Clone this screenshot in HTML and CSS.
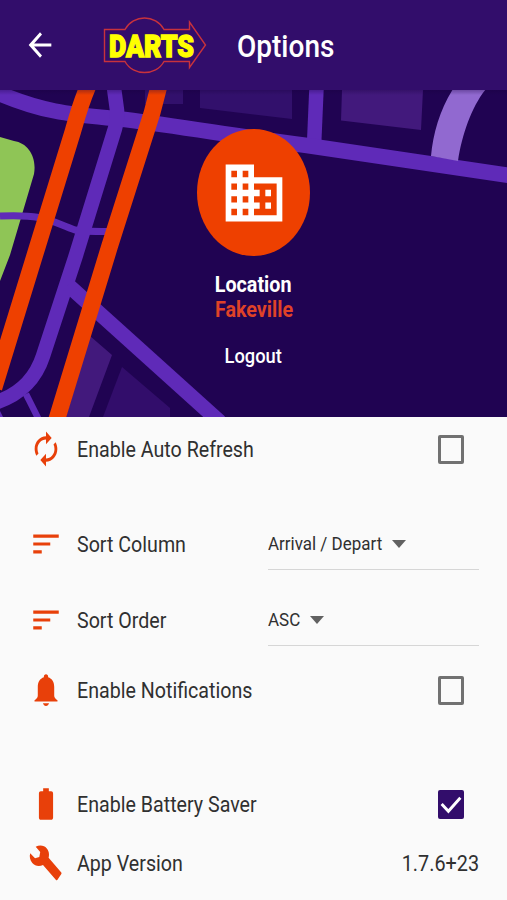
FILE: index.html
```html
<!DOCTYPE html>
<html lang="en">
<head>
<meta charset="utf-8">
<title>Options</title>
<link rel="stylesheet" href="styles.css">
</head>
<body>
<header class="appbar">
  <svg class="back" viewBox="0 0 24 24" preserveAspectRatio="none"><path d="M20 11H7.83l5.59-5.59L12 4l-8 8 8 8 1.41-1.41L7.83 13H20v-2z"/></svg>
  <svg class="logo" viewBox="0 0 108 60">
    <path class="logo-line" d="M3.500 14.500H24C28 7 36 3 43.500 3S59 7 63 14.500H88.500V7L104.500 30 88.500 52.500V46.500H63C59 54 51 57.500 43.500 57.500S28 54 24 46.500H3.500Z"/>
    <text class="logo-text" x="8" y="41.500" textLength="85" lengthAdjust="spacingAndGlyphs">DARTS</text>
  </svg>
  <h1 class="title"><span class="narrow">Options</span></h1>
</header>
<section class="hero">
  <svg class="map" viewBox="0 90 507 327" preserveAspectRatio="none">
    <defs><linearGradient id="shade" x1="0" y1="0" x2="0" y2="1"><stop offset="0" stop-color="#18003c" stop-opacity=".3"/><stop offset="1" stop-color="#18003c" stop-opacity="0"/></linearGradient></defs>
    <path fill="#32106c" d="M145 90H183V104H145ZM200 90H292V119L200 108Z"/>
    <path fill="#42197c" d="M342 90H423L421 130 341 120.500ZM90 336L112 355 89 417H66Z"/>
    <path fill="#320d6b" d="M122 367L170 408V417H103Z"/>
    <path fill="#8fc556" d="M0 137L14 141C28 143 37 157 34 174L10 255 0 281Z"/>
    <g fill="none" stroke="#5f2ab8">
      <path stroke-width="7" d="M0 216C45 214 50 221 75 230Q82 231.500 108 231.500"/>
      <path stroke-width="14.500" d="M316.500 88L314 146"/>
      <path stroke-width="15.500" d="M-4 92C48 115 82 115 125 119.500C185 127 240 137 307 145.500L510 175.500"/>
      <path stroke-width="14.500" d="M114 88L117 110Q118 121 113 135L76 255 43 356Q32 390 -3 402"/>
      <path stroke-width="15" d="M68 285L220 422"/>
      <path stroke-width="6.500" d="M26 394L39 420"/>
    </g>
    <path fill="#5f2ab8" d="M0 411L3 417H0Z"/>
    <path fill="#9169d0" d="M453 89H486C472 106 462 134 458 161L431 156C433 134 440 109 453 89Z"/>
    <g fill="none" stroke="#ee4000">
      <path stroke-width="16.500" d="M89 84C81 102 77 117 73 131L37 248-6 388"/>
      <path stroke-width="16.800" d="M159.500 84L152 113 110 245 56 422"/>
    </g>
    <rect y="90" width="507" height="5" fill="url(#shade)"/>
  </svg>
  <div class="profile">
    <div class="avatar">
      <svg class="building" viewBox="0 0 24 24" preserveAspectRatio="none"><path d="M12 7V3H2v18h20V7H12zM6 19H4v-2h2v2zm0-4H4v-2h2v2zm0-4H4V9h2v2zm0-4H4V5h2v2zm4 12H8v-2h2v2zm0-4H8v-2h2v2zm0-4H8V9h2v2zm0-4H8V5h2v2zm10 12h-8v-2h2v-2h-2v-2h2v-2h-2V9h8v10zm-2-8h-2v2h2v-2zm0 4h-2v2h2v-2z"/></svg>
    </div>
    <div class="place"><span class="narrow">Location</span></div>
    <div class="place town"><span class="narrow">Fakeville</span></div>
    <div class="logout"><span class="narrow">Logout</span></div>
  </div>
</section>
<main class="options">
  <div class="row refresh">
    <svg class="icon" viewBox="0 0 24 24" preserveAspectRatio="none"><path d="M12 6v3l4-4-4-4v3c-4.420 0-8 3.580-8 8 0 1.570.46 3.030 1.240 4.260L6.700 14.800c-.45-.83-.7-1.790-.7-2.800 0-3.310 2.690-6 6-6zm6.760 1.740L17.300 9.200c.44.84.7 1.790.7 2.800 0 3.310-2.690 6-6 6v-3l-4 4 4 4v-3c4.420 0 8-3.580 8-8 0-1.570-.46-3.030-1.240-4.260z"/></svg>
    <div class="label"><span class="narrow">Enable Auto Refresh</span></div>
    <div class="check"></div>
  </div>
  <div class="row column">
    <svg class="icon" viewBox="0 0 24 24" preserveAspectRatio="none"><path d="M3 18h6v-2H3v2zM3 6v2h18V6H3zm0 7h12v-2H3v2z"/></svg>
    <div class="label"><span class="narrow">Sort Column</span></div>
    <div class="select"><div class="value wide"><span class="narrow">Arrival / Depart</span></div><svg class="caret" viewBox="0 0 14 8" preserveAspectRatio="none"><path d="M0 0h14L7 8z"/></svg></div>
  </div>
  <div class="row order">
    <svg class="icon" viewBox="0 0 24 24" preserveAspectRatio="none"><path d="M3 18h6v-2H3v2zM3 6v2h18V6H3zm0 7h12v-2H3v2z"/></svg>
    <div class="label"><span class="narrow">Sort Order</span></div>
    <div class="select"><div class="value"><span class="narrow">ASC</span></div><svg class="caret" viewBox="0 0 14 8" preserveAspectRatio="none"><path d="M0 0h14L7 8z"/></svg></div>
  </div>
  <div class="row notify">
    <svg class="icon" viewBox="0 0 24 24" preserveAspectRatio="none"><path d="M12 2c.9 0 1.500.6 1.500 1.400v.5C16.300 4.700 17.800 7 17.800 10v5.500c0 1.300.8 2 2.300 3v.7H3.900v-.7c1.500-1 2.300-1.700 2.300-3V10c0-3 1.500-5.300 4.300-6.100v-.5C10.500 2.600 11.100 2 12 2zM9.800 20.400h4.400c-.4 1-1.200 1.700-2.200 1.700s-1.800-.7-2.200-1.700z"/></svg>
    <div class="label"><span class="narrow">Enable Notifications</span></div>
    <div class="check"></div>
  </div>
  <div class="row battery">
    <svg class="icon" viewBox="0 0 24 24" preserveAspectRatio="none"><path d="M15.670 4H14V2h-4v2H8.330C7.600 4 7 4.600 7 5.330v15.330C7 21.400 7.600 22 8.330 22h7.330c.74 0 1.340-.6 1.340-1.330V5.330C17 4.600 16.400 4 15.670 4z"/></svg>
    <div class="label"><span class="narrow">Enable Battery Saver</span></div>
    <div class="check on"><svg class="tick" viewBox="0 0 25 28" preserveAspectRatio="none"><path d="M3.500 13.500L10 20.500 21.500 7.500"/></svg></div>
  </div>
  <div class="row version">
    <svg class="icon" viewBox="0 0 34 38"><path d="M6.700 2.700C9.500 1.300 12.500 1.200 15 2.300C19 4.200 21 9 19.600 13.700L32.300 28.500Q32.800 29.200 32.300 30L28.300 35.900Q27.600 36.600 27 35.900L14 20.900C10.500 22.800 6 22.200 3.300 19C1 16.200.2 12.700 1.200 9.300L6 14.300 10.300 13 11.200 8Z"/></svg>
    <div class="label"><span class="narrow">App Version</span></div>
    <div class="number"><span class="narrow">1.7.6+23</span></div>
  </div>
</main>
</body>
</html>
```

FILE: styles.css
```css
* { box-sizing: border-box; }
body {
  margin: 0;
  width: 507px;
  height: 900px;
  overflow: hidden;
  background: #fafafa;
  color: #303030;
  font-family: Roboto, sans-serif;
}
svg { display: block; flex: none; }
.narrow {
  display: inline-block;
  white-space: nowrap;
  transform: scaleX(.889);
  transform-origin: left center;
}
.appbar {
  display: flex;
  align-items: center;
  height: 90px;
  padding-left: 23px;
  background: #320d6b;
}
.back { width: 34px; height: 38px; fill: #fff; }
.logo { width: 108px; height: 60px; margin-left: 44px; }
.logo-line { fill: none; stroke: #c8323c; stroke-width: 1.400; }
.logo-text {
  font: 900 31px Roboto, sans-serif;
  fill: #ff0;
  stroke: #ff0;
  stroke-width: 1.400;
}
.title {
  margin: 3px 0 0 28px;
  color: #fff;
  font-size: 31.500px;
  font-weight: 500;
  line-height: 40px;
}
.hero { display: grid; height: 327px; background: #200352; }
.map { grid-area: 1 / 1; width: 507px; height: 327px; }
.profile {
  grid-area: 1 / 1;
  z-index: 1;
  display: flex;
  flex-direction: column;
  align-items: center;
  padding-top: 39px;
}
.profile .narrow { transform-origin: center; }
.avatar {
  display: grid;
  place-items: center;
  width: 113px;
  height: 127px;
  border-radius: 50%;
  background: #ee4000;
}
.building { width: 68px; height: 76px; fill: #fff; }
.place {
  height: 25px;
  color: #fff;
  font-size: 22.200px;
  font-weight: 700;
  line-height: 25px;
}
.avatar + .place { margin-top: 16px; }
.town { height: 26px; color: #df4228; }
.logout {
  margin-top: 20px;
  color: #fff;
  font-size: 20.600px;
  font-weight: 500;
  line-height: 26px;
}
.row {
  display: flex;
  align-items: center;
  padding: 0 28px;
}
.refresh { height: 64px; }
.column { height: 126px; }
.order { height: 26px; }
.notify { height: 114px; }
.battery { height: 114px; }
.version { height: 4px; }
.icon { width: 34px; height: 38px; margin-left: 1px; fill: #e8400a; }
.label { width: 191px; margin-left: 14px; font-size: 22.100px; line-height: 28px; }
.check {
  width: 26px;
  height: 29px;
  margin-left: auto;
  margin-right: 15px;
  border: 3px solid #717171;
  border-radius: 2px;
}
.check.on { border: 0; background: #320d6b; }
.tick { width: 26px; height: 29px; fill: none; stroke: #fff; stroke-width: 2.800; }
.select {
  display: flex;
  align-items: center;
  width: 211px;
  height: 52px;
  border-bottom: 1px solid #d6d6d6;
  font-size: 19.100px;
}
.value { width: 42px; }
.value.wide { width: 124px; }
.caret { width: 14px; height: 8px; fill: #616161; margin-top: 1px; }
.number { margin-left: auto; font-size: 22.300px; }
.number .narrow { transform-origin: right center; }
```
